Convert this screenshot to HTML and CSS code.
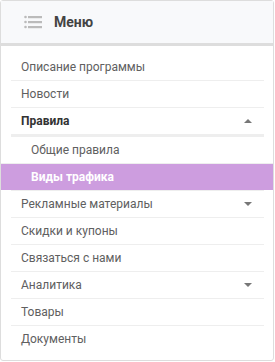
FILE: index.html
```html
<!DOCTYPE html>
<html lang="ru">
<head>
    <meta charset="UTF-8">
    <meta name="viewport" content="width=device-width, initial-scale=1.0">
    <title>Меню</title>
    <link rel="stylesheet" href="styles.css">
</head>
<body>
    <div class="menu-card">
        <div class="menu-header">
            <svg class="menu-icon" width="18" height="14" viewBox="0 0 18 14">
                <circle cx="1.5" cy="2" r="1.3"/>
                <circle cx="1.5" cy="7" r="1.3"/>
                <circle cx="1.5" cy="12" r="1.3"/>
                <rect x="4" y="1" width="14" height="2.2"/>
                <rect x="4" y="6" width="14" height="2.2"/>
                <rect x="4" y="11" width="14" height="2.2"/>
            </svg>
            <span class="menu-title">Меню</span>
        </div>

        <ul class="menu-list">
            <li class="item">Описание программы</li>
            <li class="item">Новости</li>
            <li class="item open">Правила <span class="caret up"></span></li>
            <li class="submenu">
                <ul>
                    <li class="item sub">Общие правила</li>
                    <li class="item sub active">Виды трафика</li>
                </ul>
            </li>
            <li class="item">Рекламные материалы <span class="caret"></span></li>
            <li class="item">Скидки и купоны</li>
            <li class="item">Связаться с нами</li>
            <li class="item">Аналитика <span class="caret"></span></li>
            <li class="item">Товары</li>
            <li class="item">Документы</li>
        </ul>
    </div>
</body>
</html>
```

FILE: styles.css
```css
body {
    margin: 0;
    font-family: Roboto, "Liberation Sans", Arial, sans-serif;
    background-color: #ffffff;
}
.menu-card {
    width: 272px;
    border: 1px solid #dddddd;
    border-radius: 3px;
    background-color: #ffffff;
    padding-bottom: 8px;
}
.menu-header {
    height: 42px;
    display: flex;
    align-items: center;
    padding-left: 23px;
    background-color: #f8f9fb;
    border-bottom: 3px solid #dddddd;
}
.menu-icon {
    fill: #bbbbbb;
}
.menu-title {
    margin-left: 12px;
    font-size: 14px;
    font-weight: bold;
    color: #444444;
}
.menu-list, .menu-list ul {
    list-style: none;
    margin: 0;
    padding: 0;
}
.menu-list {
    padding: 7px 9px 0 10px;
}
.item {
    display: flex;
    align-items: center;
    justify-content: space-between;
    height: 26px;
    padding: 0 12px 0 10px;
    border-top: 1px solid #eeeeee;
    font-size: 12px;
    color: #606060;
}
.menu-list > .item:first-child {
    border-top-color: transparent;
}
.item.open {
    font-weight: bold;
    color: #333333;
}
.submenu {
    border-top: 3px solid #eeeeee;
}
.item.sub {
    padding-left: 20px;
}
.submenu li:first-child {
    border-top: none;
}
.item.active {
    margin: 0 -9px 0 -10px;
    padding-left: 30px;
    background-color: #cd9ddf;
    color: #ffffff;
    font-weight: bold;
}
.caret {
    width: 0;
    height: 0;
    border-left: 4px solid transparent;
    border-right: 4px solid transparent;
    border-top: 4px solid #777777;
}
.caret.up {
    border-top: none;
    border-bottom: 4px solid #777777;
}
```
